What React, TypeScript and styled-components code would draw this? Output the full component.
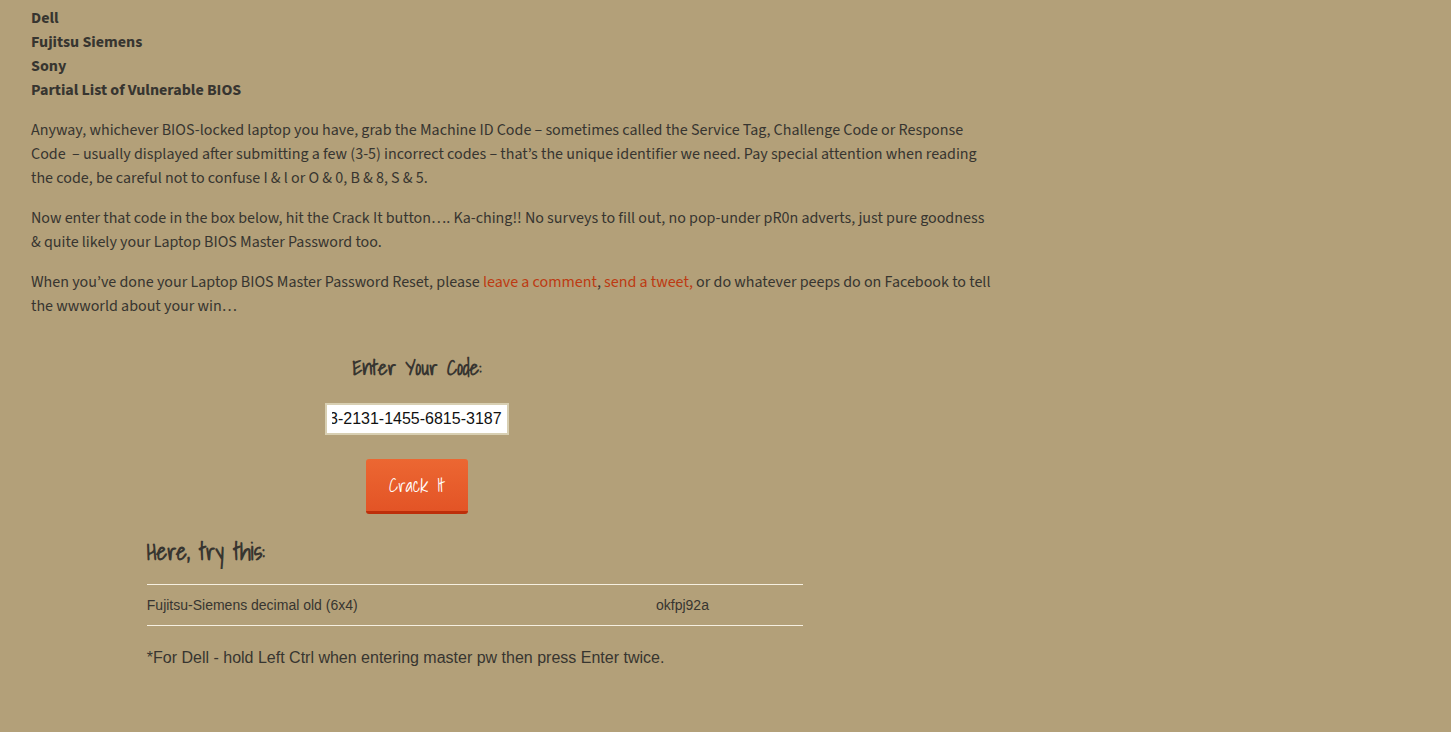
import React, { useLayoutEffect, useRef, useState } from "react";
import styled, { createGlobalStyle } from "styled-components";

const sourceSans = `"Source Sans 3", "Source Sans Pro", "Noto Sans CJK JP", "Noto Sans", sans-serif`;
const hand = `"Shadows Into Light", "Liberation Sans Narrow", "Liberation Sans", cursive`;
const arial = `"Liberation Sans", Arial, sans-serif`;

const GlobalStyle = createGlobalStyle`
  *, *::before, *::after { box-sizing: border-box; }
  html { background: #b3a079; }
  body {
    margin: 0;
    color: #373530;
    font: 16px/24px ${sourceSans};
  }
`;

const Article = styled.main`
  max-width: 1027px;
  padding: 6px 31px 40px;
`;

const VendorList = styled.ul`
  list-style: none;
  margin: 0 0 16px;
  padding: 0;
  font-weight: 700;
`;

const Paragraph = styled.p`
  margin: 0 0 16px;
`;

const Link = styled.a`
  color: #bd3a12;
  text-decoration: none;
`;

const Cracker = styled.section`
  width: 80%;
  padding-top: 18px;
`;

const CodeForm = styled.form`
  display: flex;
  flex-direction: column;
  align-items: center;
`;

const CodeLabel = styled.label`
  margin-bottom: 21px;
  font: 700 21px/30px ${hand};
`;

const CodeInput = styled.input`
  width: 184px;
  height: 32px;
  margin-bottom: 24px;
  padding: 0 5px;
  border: 2px solid #d8cfb2;
  border-radius: 0;
  outline: 0;
  background: #fff;
  color: #111;
  font: 16px/24px ${arial};
`;

const CrackButton = styled.button`
  width: 102px;
  height: 55px;
  padding: 0;
  border: 0;
  border-bottom: 3px solid #bd2f0a;
  border-radius: 3px;
  background: linear-gradient(#ec6732, #e35426);
  color: #fff;
  font: 19px/24px ${hand};
  cursor: pointer;
`;

const Results = styled.div`
  margin: 22px 0 0 15%;
  font-family: ${arial};
`;

const ResultsTitle = styled.h3`
  margin: 0 0 16px;
  font: 700 23px/32px ${hand};
`;

const ResultsTable = styled.table`
  width: 100%;
  margin-bottom: 20px;
  border-collapse: collapse;
  border-top: 1px solid #f6efe0;
  border-bottom: 1px solid #f6efe0;
  font-size: 14px;
`;

const Cell = styled.td<{ $width?: string }>`
  width: ${(p) => p.$width ?? "auto"};
  padding: 8px 0;
`;

const Note = styled.p`
  margin: 0;
  font-size: 16px;
`;

const vendors = ["Dell", "Fujitsu Siemens", "Sony", "Partial List of Vulnerable BIOS"];

export default function App() {
  const [code, setCode] = useState("3-2131-1455-6815-3187");
  const input = useRef<HTMLInputElement>(null);

  // Keep the end of a long code in view.
  useLayoutEffect(() => {
    if (input.current) input.current.scrollLeft = input.current.scrollWidth;
  }, []);

  return (
    <>
      <GlobalStyle />
      <Article>
        <VendorList>
          {vendors.map((name) => (
            <li key={name}>{name}</li>
          ))}
        </VendorList>
        <Paragraph>
          Anyway, whichever BIOS-locked laptop you have, grab the Machine ID Code – sometimes called the
          Service Tag, Challenge Code or Response Code&nbsp; – usually displayed after submitting a few (3-5)
          incorrect codes – that’s the unique identifier we need. Pay special attention when reading the code,
          be careful not to confuse I &amp; l or O &amp; 0, B &amp; 8, S &amp; 5.
        </Paragraph>
        <Paragraph>
          Now enter that code in the box below, hit the Crack It button…. Ka-ching!! No surveys to fill out, no
          pop-under pR0n adverts, just pure goodness &amp; quite likely your Laptop BIOS Master Password too.
        </Paragraph>
        <Paragraph>
          When you’ve done your Laptop BIOS Master Password Reset, please{" "}
          <Link href="#comment">leave a comment</Link>, <Link href="#tweet">send a tweet,</Link> or do whatever
          peeps do on Facebook to tell the wwworld about your win…
        </Paragraph>
        <Cracker>
          <CodeForm onSubmit={(e) => e.preventDefault()}>
            <CodeLabel htmlFor="code">Enter Your Code:</CodeLabel>
            <CodeInput id="code" ref={input} type="text" value={code} onChange={(e) => setCode(e.target.value)} />
            <CrackButton type="submit">Crack It</CrackButton>
          </CodeForm>
          <Results>
            <ResultsTitle>Here, try this:</ResultsTitle>
            <ResultsTable>
              <tbody>
                <tr>
                  <Cell>Fujitsu-Siemens decimal old (6x4)</Cell>
                  <Cell $width="147px">okfpj92a</Cell>
                </tr>
              </tbody>
            </ResultsTable>
            <Note>*For Dell - hold Left Ctrl when entering master pw then press Enter twice.</Note>
          </Results>
        </Cracker>
      </Article>
    </>
  );
}
